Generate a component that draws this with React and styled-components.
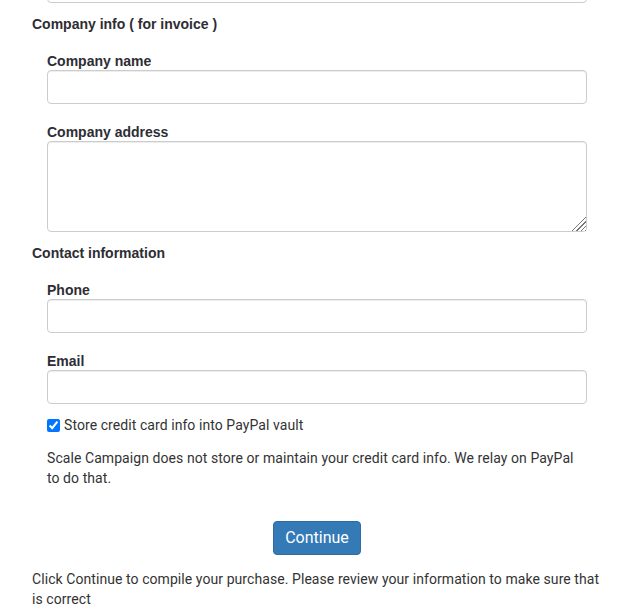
import React from 'react'
import styled, { createGlobalStyle } from 'styled-components'

const GlobalStyle = createGlobalStyle`
  html, body {
    margin: 0;
    padding: 0;
    background: #fff;
  }
  body {
    font-family: Roboto, "Helvetica Neue", Arial, sans-serif;
    font-size: 14px;
    line-height: 20px;
    letter-spacing: 0.07px;
    color: #333;
  }
  * {
    box-sizing: border-box;
  }
`

const Page = styled.div`
  width: 570px;
  margin-left: 32px;
  overflow: hidden;
`

const Fields = styled.div`
  padding: 0 15px;
`

const SectionTitle = styled.h4`
  margin: ${p => p.$top}px -15px 17px;
  font-family: "Liberation Sans", Arial, sans-serif;
  font-size: 14px;
  line-height: 20px;
  font-weight: 700;
  letter-spacing: 0;
  color: #2d2d33;
`

const FormGroup = styled.div`
  display: flex;
  flex-direction: column;
  margin-bottom: ${p => (p.$last ? 11 : 18)}px;
`

const Label = styled.label`
  display: block;
  padding-top: 1px;
  font-family: "Liberation Sans", Arial, sans-serif;
  font-weight: 700;
  line-height: 18px;
  letter-spacing: 0;
  color: #2d2d33;
`

const fieldBase = `
  display: block;
  width: 100%;
  padding: 6px 12px;
  font-family: Roboto, "Helvetica Neue", Arial, sans-serif;
  font-size: 14px;
  color: #555;
  background: #fff;
  border: 1px solid #ccc;
  border-radius: 4px;
  box-shadow: inset 0 1px 1px rgba(0, 0, 0, 0.075);
  outline: none;
`

const Input = styled.input`
  ${fieldBase}
  height: 34px;
  margin-top: ${p => p.$offset || 0}px;
`

const TextArea = styled.textarea`
  ${fieldBase}
  height: 91px;
  resize: vertical;

  &::-webkit-resizer {
    width: 15px;
    height: 15px;
    background:
      linear-gradient(135deg, #fff 45%, transparent 45%),
      repeating-linear-gradient(135deg, #fff 0 2px, #777 2px 3px);
  }
`

const CheckRow = styled.label`
  display: flex;
  align-items: center;
  gap: 4px;
  margin: 1px 0 13px;
  line-height: 20px;
`

const Check = styled.input`
  width: 13px;
  height: 13px;
  margin: 1px 0 0;
`

const Note = styled.p`
  margin: 0 0 33px;
`

const Actions = styled.div`
  display: flex;
  justify-content: center;
  margin-bottom: 14px;
`

const Button = styled.button`
  padding: 6px 11px;
  font-family: Roboto, "Helvetica Neue", Arial, sans-serif;
  font-size: 16px;
  line-height: 20px;
  color: #fff;
  background: #337ab7;
  border: 1px solid #2e6da4;
  border-radius: 4px;
  cursor: pointer;
`

const Footer = styled.p`
  margin: 0;
`

export default function App() {
  return (
    <>
      <GlobalStyle />
      <Page>
        <Fields>
          <Input type="text" $offset={-31} />
          <SectionTitle $top={11}>Company info ( for invoice )</SectionTitle>
          <FormGroup>
            <Label>Company name</Label>
            <Input type="text" />
          </FormGroup>
          <FormGroup $last>
            <Label>Company address</Label>
            <TextArea />
          </FormGroup>
          <SectionTitle $top={0}>Contact information</SectionTitle>
          <FormGroup>
            <Label>Phone</Label>
            <Input type="tel" />
          </FormGroup>
          <FormGroup $last>
            <Label>Email</Label>
            <Input type="email" />
          </FormGroup>
          <CheckRow>
            <Check type="checkbox" defaultChecked />
            Store credit card info into PayPal vault
          </CheckRow>
          <Note>
            Scale Campaign does not store or maintain your credit card info. We relay on PayPal to do that.
          </Note>
        </Fields>
        <Actions>
          <Button type="button">Continue</Button>
        </Actions>
        <Footer>
          Click Continue to compile your purchase. Please review your information to make sure that is correct
        </Footer>
      </Page>
    </>
  )
}
